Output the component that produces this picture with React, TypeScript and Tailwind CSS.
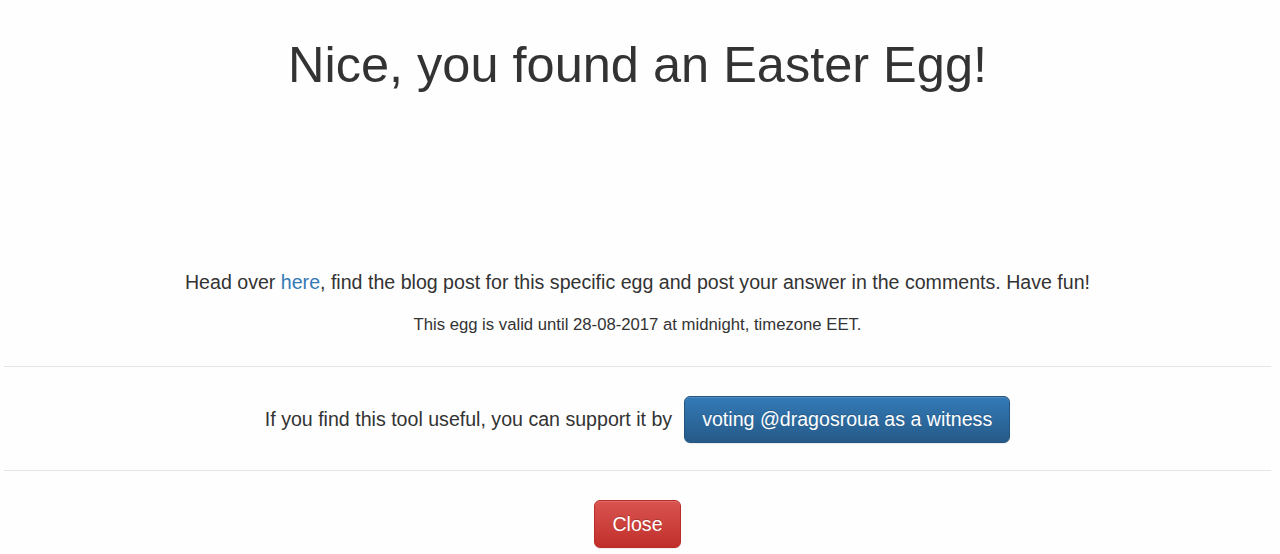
import React from 'react';

const App: React.FC = () => {
  return (
    <div className="min-h-[554px] w-full bg-[#fefefe] text-[#333] font-['Liberation_Sans',Arial,sans-serif]">
      <div className="ml-[4px] mr-[9px]">
        {/* header */}
        <div className="pt-[37px]">
          <h1 className="text-center text-[50.5px] leading-[55px] font-normal">Nice, you found an Easter Egg!</h1>
        </div>

        {/* image area (blank in the shot) */}
        <div className="h-[176px]" />

        <div className="text-center">
          <p className="text-[19.6px] leading-[28px]">
            Head over <a href="#" className="text-[#337ab7]">here</a>, find the blog post for this specific egg and post your answer in the comments. Have fun!
          </p>
          <p className="mt-[17px] text-[16.7px] leading-[23.5px]">
            This egg is valid until 28-08-2017 at midnight, timezone EET.
          </p>
        </div>

        <div className="mt-[29px] border-t border-[#e5e5e5]" />

        <div className="flex items-center justify-center gap-[12px] pt-[29px] pb-[27px]">
          <span className="text-[19.6px] leading-[28px]">If you find this tool useful, you can support it by</span>
          <button className="h-[47px] rounded-[6px] border border-[#245580] bg-gradient-to-b from-[#337ab7] to-[#265a88] px-[17px] text-[19.6px] leading-[28px] text-white [text-shadow:0_-1px_0_rgba(0,0,0,0.2)] shadow-[inset_0_1px_0_rgba(255,255,255,0.15),0_1px_1px_rgba(0,0,0,0.075)]">
            voting @dragosroua as a witness
          </button>
        </div>

        <div className="border-t border-[#e5e5e5]" />

        <div className="flex justify-center pt-[29px]">
          <button className="h-[48px] w-[87px] rounded-[6px] border border-[#b92c28] bg-gradient-to-b from-[#d9534f] to-[#c12e2a] text-[19.6px] leading-[28px] text-white [text-shadow:0_-1px_0_rgba(0,0,0,0.2)] shadow-[inset_0_1px_0_rgba(255,255,255,0.15),0_1px_1px_rgba(0,0,0,0.075)]">
            Close
          </button>
        </div>
      </div>
    </div>
  );
};

export default App;
